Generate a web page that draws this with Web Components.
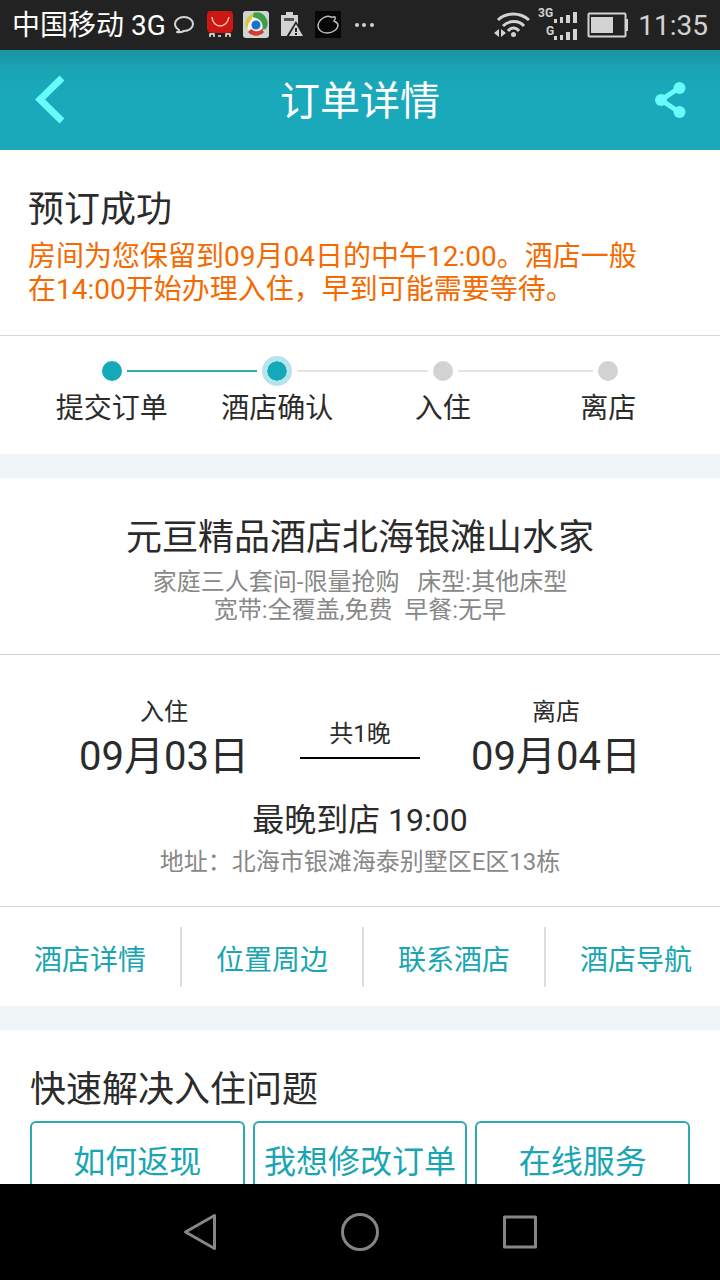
<!DOCTYPE html>
<html lang="zh-CN">
<head>
<meta charset="utf-8">
<meta name="viewport" content="width=device-width, initial-scale=1">
<title>订单详情</title>
<style>
  body {
    margin: 0;
    background: #fff;
    color: #2b2b2b;
    font-family: Roboto, "Noto Sans CJK SC", sans-serif;
    --teal: #1aa9ba;
    --link: #1aa5b2;
    --line: #d6d6d6;
    --strip: #f0f5f7;
  }
</style>
</head>
<body>
<order-page></order-page>

<script>
  const define = (name, html) => {
    const template = document.createElement('template');
    template.innerHTML = html;
    customElements.define(name, class extends HTMLElement {
      constructor() {
        super();
        this.attachShadow({ mode: 'open' }).append(template.content.cloneNode(true));
      }
    });
  };

  define('status-bar', `
    <style>
      :host { display: flex; align-items: center; justify-content: space-between; height: 50px; padding: 0 12px; background: #222; color: #fff; font-size: 28px; line-height: 34px; }
      div { display: flex; align-items: center; gap: 4px; }
      .right { gap: 8px; color: #d2d2d2; }
      span, time { padding-top: 2px; }
      svg { display: block; flex: none; }
    </style>
    <div>
      <span>中国移动 3G</span>
      <svg width="210" height="50" viewBox="170 0 210 50" aria-hidden="true">
        <path d="M179 30c-3-2-4-4-4-6 0-4 4-7 9-7s9 3 9 7-4 7-9 7c-2 1-4 2-7 1 1 0 2-1 2-2z" fill="none" stroke="#d6d6d6" stroke-width="2" stroke-linejoin="round"/>
        <path d="M210 11h20q3 0 3 4v14q-1 4-5 4h-16q-4 0-5-4V15q0-4 3-4z" fill="#cc1712"/>
        <path d="M212 17c1 12 15 12 17 0" fill="none" stroke="#ffc3ac" stroke-width="1.5"/>
        <path d="M210 37v-3h4v3M226 37v-3h4v3M218 36h3" fill="none" stroke="#eee" stroke-width="1.5"/>
        <rect x="243" y="11" width="26" height="27" rx="3" fill="#cdd4d4"/>
        <circle cx="256" cy="24.5" r="10" fill="#f2f4f2"/>
        <path d="M253 13a11 11 0 0 1 13 16l-4 1c2-6-1-11-9-13z" fill="#3f9c4a"/>
        <path d="M264 32c-4 5-12 5-16 0l3-3c4 3 8 3 11 0z" fill="#d63a31"/>
        <path d="M247 30c-4-7 0-15 7-17l-2 6c-4 3-4 7-5 11z" fill="#d8c640"/>
        <circle cx="256" cy="25" r="4.5" fill="#1c72c8"/>
        <path d="M281 15h5v-3h7v3h5v8l-6 13h-11z" fill="#d2d2d2"/>
        <path d="M284 18h10v3h-10z" fill="#555"/>
        <path d="M296 21l-10 16h18z" fill="#222"/>
        <path d="M296 24l-7 12h14z" fill="#d2d2d2"/>
        <path d="M296 28v4M296 33v2" stroke="#222" stroke-width="2"/>
        <rect x="315" y="11" width="26" height="27" fill="#070707"/>
        <path d="M323 18c3-2 6-2 8-1 2 1 3-1 4 0 1 2 0 3-1 4 2 1 4 2 4 4 0 4-5 8-11 8-5 0-9-3-9-7 0-3 2-6 5-8z" fill="none" stroke="#bbb" stroke-width="1.5"/>
        <g fill="#d0d0d0"><circle cx="357" cy="25" r="2"/><circle cx="364" cy="25" r="2"/><circle cx="372" cy="25" r="2"/></g>
      </svg>
    </div>
    <div class="right">
      <svg width="140" height="50" viewBox="490 0 140 50" aria-hidden="true" fill="#d2d2d2">
        <g fill="none" stroke="#d2d2d2" stroke-width="3">
          <path d="M498 20c8-8 22-8 31 0M503 26c6-6 16-6 21 0M508 31c3-4 8-4 11 0"/>
        </g>
        <circle cx="513.5" cy="34.5" r="2.5"/>
        <path d="M499 29v8l-5-4zM501 29v8l5-4z"/>
        <text x="538" y="17" font-size="12" font-weight="700">3G</text>
        <text x="546" y="35" font-size="12" font-weight="700">G</text>
        <path d="M554 19h3v4h-3zM560 17h3v6h-3zM566 15h4v8h-4zM573 12h4v11h-4z"/>
        <path d="M554 36h3v4h-3zM560 35h3v5h-3zM566 32h4v8h-4zM573 29h4v11h-4z"/>
        <rect x="588.5" y="13.5" width="37" height="23" rx="1" fill="none" stroke="#d2d2d2" stroke-width="2"/>
        <path d="M591 17h22v16h-22zM626 19h2v12h-2z"/>
      </svg>
      <time>11:35</time>
    </div>
  `);

  define('title-bar', `
    <style>
      :host { display: grid; grid-template-columns: 100px 1fr 100px; align-items: center; height: 100px; background: linear-gradient(#1a94a2, #1aa4b4 20px, var(--teal) 40px); color: #fff; }
      h1 { margin: 0; padding-top: 4px; font-size: 40px; font-weight: 400; line-height: 52px; text-align: center; }
      button { display: block; height: 100px; padding: 0; border: 0; background: none; }
      svg { display: block; }
    </style>
    <button aria-label="返回">
      <svg width="100" height="100" viewBox="0 0 100 100" fill="none" stroke="#66fcfb" stroke-width="7"><path d="M62 28L40 49.5 62 71"/></svg>
    </button>
    <h1><slot></slot></h1>
    <button aria-label="分享">
      <svg width="100" height="100" viewBox="0 0 100 100" fill="#66fcfb"><path d="M59 38L41 50l18 12" fill="none" stroke="#66fcfb" stroke-width="5"/><circle cx="59.5" cy="38" r="6"/><circle cx="41" cy="50" r="6"/><circle cx="59.5" cy="62" r="6"/></svg>
    </button>
  `);

  define('booking-result', `
    <style>
      :host { display: block; padding: 36px 56px 29px 28px; border-bottom: 1px solid var(--line); }
      h2 { margin: 0 0 6px; font-size: 36px; font-weight: 400; line-height: 48px; }
      p { margin: 0; color: #f56a00; font-size: 28px; line-height: 33px; }
    </style>
    <h2><slot name="title"></slot></h2>
    <p><slot></slot></p>
  `);

  define('progress-steps', `
    <style>
      :host { display: flex; padding: 20px 29px 28px; }
    </style>
    <slot></slot>
  `);

  define('progress-step', `
    <style>
      :host { flex: 1; display: block; text-align: center; font-size: 28px; line-height: 34px; --dot: #d2d2d2; --before: #e4e4e4; --after: #e4e4e4; }
      :host([state="done"]), :host([state="current"]) { --dot: #14a9b8; }
      :host([state="done"]) { --after: #2bb0ac; }
      :host([state="current"]) { --before: #2bb0ac; }
      :host(:first-of-type) { --before: transparent; }
      :host(:last-of-type) { --after: transparent; }
      .rail { display: flex; align-items: center; gap: 5px; height: 30px; margin-bottom: 6px; }
      .rail::before, .rail::after { content: ""; flex: 1; height: 2px; background: var(--before); }
      .rail::after { background: var(--after); }
      i { width: 20px; height: 20px; border-radius: 50%; background: var(--dot); }
      :host([state="current"]) i { border: 5px solid #b5e4ec; background-clip: padding-box; }
    </style>
    <div class="rail"><i></i></div>
    <slot></slot>
  `);

  define('hotel-summary', `
    <style>
      :host { display: block; padding: 36px 28px 30px; border-top: 24px solid var(--strip); border-bottom: 1px solid var(--line); text-align: center; }
      h2 { margin: 0 0 6px; font-size: 36px; font-weight: 400; line-height: 48px; }
      p { margin: 0; color: #888; font-size: 24px; line-height: 28px; white-space: pre-wrap; }
    </style>
    <h2><slot name="name"></slot></h2>
    <p><slot></slot></p>
  `);

  define('stay-date', `
    <style>
      :host { display: block; text-align: center; font-size: 40px; line-height: 48px; }
      span { display: block; margin-bottom: 6px; font-size: 24px; line-height: 30px; }
    </style>
    <span><slot name="label"></slot></span>
    <slot></slot>
  `);

  define('stay-info', `
    <style>
      :host { display: block; padding: 42px 28px 30px; border-bottom: 1px solid var(--line); text-align: center; }
      .dates { display: grid; grid-template-columns: 1fr 120px 1fr; align-items: start; margin-bottom: 19px; }
      .nights { padding: 22px 0 8px; border-bottom: 2px solid #000; font-size: 24px; line-height: 30px; }
      p { margin: 0 0 8px; font-size: 32px; line-height: 40px; }
      address { color: #888; font-size: 24px; font-style: normal; line-height: 28px; }
    </style>
    <div class="dates">
      <stay-date><span slot="label">入住</span>09月03日</stay-date>
      <div class="nights">共1晚</div>
      <stay-date><span slot="label">离店</span>09月04日</stay-date>
    </div>
    <p>最晚到店 19:00</p>
    <address>地址：北海市银滩海泰别墅区E区13栋</address>
  `);

  define('quick-links', `
    <style>
      :host { display: block; overflow: hidden; border-bottom: 24px solid var(--strip); }
      nav { display: grid; grid-template-columns: repeat(4, 1fr); margin-right: -8px; padding: 20px 0 19px; }
      a { height: 56px; padding-top: 4px; border-right: 2px solid #dedede; color: var(--link); font-size: 28px; line-height: 60px; text-align: center; text-decoration: none; }
    </style>
    <nav>
      <a href="#detail">酒店详情</a>
      <a href="#nearby">位置周边</a>
      <a href="#contact">联系酒店</a>
      <a href="#route">酒店导航</a>
    </nav>
  `);

  define('help-panel', `
    <style>
      :host { display: block; padding: 36px 30px; }
      h2 { margin: 0 0 7px; font-size: 36px; font-weight: 400; line-height: 48px; }
      div { display: grid; grid-template-columns: repeat(3, 1fr); gap: 8px; }
      button { height: 80px; padding: 2px 0 0; border: 2px solid #2ba9ae; border-radius: 6px; background: #fff; color: var(--link); font: 32px/40px Roboto, "Noto Sans CJK SC", sans-serif; white-space: nowrap; }
    </style>
    <h2>快速解决入住问题</h2>
    <div>
      <button>如何返现</button>
      <button>我想修改订单</button>
      <button>在线服务</button>
    </div>
  `);

  define('system-nav', `
    <style>
      :host { display: flex; align-items: center; justify-content: center; gap: 120px; height: 96px; background: #000; }
      button { padding: 0; border: 0; background: none; }
      svg { display: block; fill: none; stroke: #868686; stroke-width: 3; stroke-linejoin: round; }
    </style>
    <button aria-label="后退"><svg width="40" height="40" viewBox="0 0 40 40"><path d="M34.5 3.5v33L5.5 20z"/></svg></button>
    <button aria-label="主屏幕"><svg width="40" height="40" viewBox="0 0 40 40"><circle cx="20" cy="20" r="17.5"/></svg></button>
    <button aria-label="最近任务"><svg width="40" height="40" viewBox="0 0 40 40"><rect x="4.5" y="5" width="31" height="30"/></svg></button>
  `);

  define('order-page', `
    <style>
      :host { display: grid; grid-template-rows: auto auto minmax(0, 1fr) auto; height: 100vh; }
      main { overflow: hidden; }
    </style>
    <status-bar></status-bar>
    <title-bar>订单详情</title-bar>
    <main>
      <booking-result><span slot="title">预订成功</span>房间为您保留到09月04日的中午12:00。酒店一般在14:00开始办理入住，早到可能需要等待。</booking-result>
      <progress-steps>
        <progress-step state="done">提交订单</progress-step>
        <progress-step state="current">酒店确认</progress-step>
        <progress-step>入住</progress-step>
        <progress-step>离店</progress-step>
      </progress-steps>
      <hotel-summary><span slot="name">元亘精品酒店北海银滩山水家</span>家庭三人套间-限量抢购   床型:其他床型<br>宽带:全覆盖,免费  早餐:无早</hotel-summary>
      <stay-info></stay-info>
      <quick-links></quick-links>
      <help-panel></help-panel>
    </main>
    <system-nav></system-nav>
  `);
</script>
</body>
</html>
